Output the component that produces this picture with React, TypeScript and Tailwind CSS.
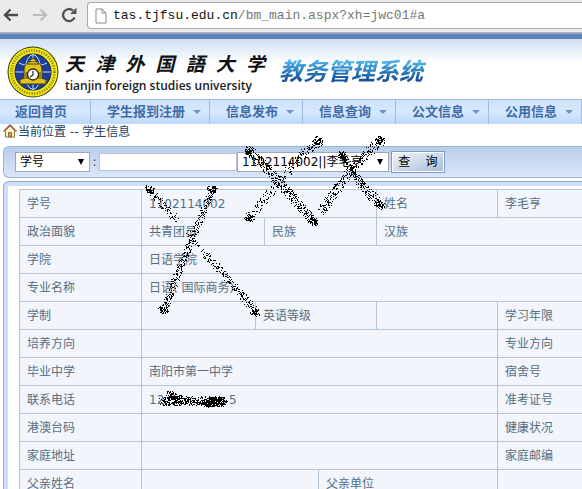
import React from "react";

type Point = [number, number];
type Cell = { text?: string; span?: number; head?: boolean };

const navItems = [
  { label: "学生报到注册" },
  { label: "信息发布" },
  { label: "信息查询" },
  { label: "公文信息" },
  { label: "公用信息" },
];

const rows: Cell[][] = [
  [{ text: "学号", head: true }, { text: "1102114002", span: 4 }, { text: "姓名", head: true }, { text: "李毛亨" }],
  [{ text: "政治面貌", head: true }, { text: "共青团员", span: 2 }, { text: "民族", span: 2, head: true }, { text: "汉族", span: 2 }],
  [{ text: "学院", head: true }, { text: "日语学院", span: 6 }],
  [{ text: "专业名称", head: true }, { text: "日语( 国际商务)", span: 6 }],
  [{ text: "学制", head: true }, {}, { text: "英语等级", span: 3, head: true }, {}, { text: "学习年限", head: true }],
  [{ text: "培养方向", head: true }, { span: 5 }, { text: "专业方向", head: true }],
  [{ text: "毕业中学", head: true }, { text: "南阳市第一中学", span: 5 }, { text: "宿舍号", head: true }],
  [{ text: "联系电话", head: true }, { text: "12                 5", span: 5 }, { text: "准考证号", head: true }],
  [{ text: "港澳台码", head: true }, { span: 5 }, { text: "健康状况", head: true }],
  [{ text: "家庭地址", head: true }, { span: 5 }, { text: "家庭邮编", head: true }],
  [{ text: "父亲姓名", head: true }, { span: 3 }, { text: "父亲单位", span: 2, head: true }, {}],
];

function random(seed: number) {
  let s = seed;
  return () => {
    s = (s * 1664525 + 1013904223) % 4294967296;
    return s / 4294967296;
  };
}

// Speckled brush: one-pixel grains scattered round a line, in loose clumps.
function spray(from: Point, to: Point, radius: number, density: number, seed: number) {
  const next = random(seed);
  const length = Math.hypot(to[0] - from[0], to[1] - from[1]);
  let d = "";
  const grain = (cx: number, cy: number, r: number) => {
    const a = next() * Math.PI * 2;
    const q = Math.sqrt(next()) * r;
    const x = Math.round(cx + Math.cos(a) * q);
    const y = Math.round(cy + Math.sin(a) * q);
    d += `M${x} ${y}h1v1h-1z`;
  };
  const clumps = Math.ceil((length * density) / 7);
  for (let i = 0; i < clumps; i++) {
    const t = (i + next()) / clumps;
    for (let k = 0; k < 7; k++) {
      grain(from[0] + (to[0] - from[0]) * t, from[1] + (to[1] - from[1]) * t, radius);
    }
  }
  return d;
}

// The heavy blot where the brush was first set down.
const blot = (x: number, y: number, seed: number) => spray([x - 2, y - 1], [x + 2, y + 1], 4, 12, seed);

const strokes = [
  spray([249, 150], [271, 173], 5, 3.4, 3),
  spray([271, 173], [313, 221], 5, 3.8, 7),
  spray([318, 141], [300, 156], 5, 2.6, 11),
  spray([300, 156], [249, 217], 5, 1.8, 13),
  spray([342, 154], [356, 178], 4, 3.2, 17),
  spray([356, 178], [380, 205], 5, 3.6, 19),
  spray([380, 140], [351, 169], 5, 2.6, 23),
  spray([351, 169], [321, 211], 5, 3.4, 29),
  spray([149, 189], [175, 217], 4, 2, 31),
  spray([175, 217], [203, 251], 3, 0.5, 33),
  spray([203, 251], [240, 293], 4, 2.2, 37),
  spray([240, 293], [256, 312], 4, 3.2, 41),
  spray([212, 189], [192, 237], 4, 2.4, 43),
  spray([192, 237], [163, 310], 4, 3, 47),
  blot(249, 151, 71),
  blot(313, 221, 72),
  blot(318, 141, 73),
  blot(249, 217, 74),
  blot(342, 155, 75),
  blot(379, 204, 76),
  blot(380, 140, 77),
  blot(149, 189, 78),
  blot(255, 312, 79),
  blot(212, 189, 80),
  blot(163, 309, 81),
  spray([162, 401], [222, 401], 5, 7, 53),
  spray([168, 394], [180, 398], 4, 9, 59),
  spray([208, 402], [223, 401], 5, 16, 61),
].join("");

function Emblem() {
  return (
    <svg className="h-13 w-13 shrink-0" viewBox="0 0 52 52" role="img" aria-label="天津外国语大学校徽">
      <circle cx="26" cy="26" r="25.5" fill="#39400d" />
      <circle cx="26" cy="26" r="24.5" fill="#f4e613" />
      <circle cx="26" cy="26" r="21.5" fill="none" stroke="#857d10" strokeWidth="2.6" strokeDasharray="1.1 1.5" />
      <circle cx="26" cy="26" r="18" fill="#1c3f9a" stroke="#10225c" />
      <g fill="none" stroke="#cbdcf5" strokeWidth="1">
        <ellipse cx="26" cy="26" rx="8" ry="17.5" />
        <path d="M26 8.500v35M8.500 26h35M12 17c8 4 20 4 28 0M12 35c8-4 20-4 28 0" />
      </g>
      <path d="M13 38v-4l4-2v-8c0-6 5-9 9-9s9 3 9 9v8l4 2v4z" fill="#e0c41c" stroke="#433b09" />
      <path d="M17 26h4v7h-4zM31 26h4v7h-4z" fill="#9c8312" />
      <path d="M20 18h12M22 15l4-3 4 3" stroke="#4b410a" fill="#e0c41c" />
      <circle cx="26" cy="28.500" r="5.500" fill="#fff" stroke="#2c2707" strokeWidth="1.300" />
      <path d="M26 25v4l-3 2" fill="none" stroke="#222" strokeWidth="1.200" />
    </svg>
  );
}

function HomeIcon() {
  return (
    <svg className="h-3.5 w-3.5 shrink-0" viewBox="0 0 14 14" aria-hidden="true">
      <path d="M2.500 6.500v6.500h9V6.500L7 2z" fill="#fdf3c4" stroke="#8a7a4c" />
      <path d="M.5 7.500L7 1l6.500 6.500" fill="none" stroke="#a0584a" strokeWidth="1.400" />
      <path d="M5.500 13V8.500h3V13z" fill="#d9a04e" stroke="#8b6a3b" />
    </svg>
  );
}

function Toolbar() {
  return (
    <div className="flex h-[33px] items-start border-b border-[#b5b5b5] bg-[#ebebeb]">
      <div className="flex h-[30px] w-[87px] shrink-0 items-center gap-[13px] pl-[3px]">
        <button type="button" aria-label="后退">
          <svg className="h-4 w-4" viewBox="0 0 16 16" fill="none" stroke="#4c4c4c" strokeWidth="2.400">
            <path d="M15 8H2M7.500 2.500L2 8l5.500 5.500" />
          </svg>
        </button>
        <button type="button" aria-label="前进">
          <svg className="h-4 w-4" viewBox="0 0 16 16" fill="none" stroke="#bcbcbc" strokeWidth="2.200">
            <path d="M1 8h13M8.500 2.500L14 8l-5.500 5.500" />
          </svg>
        </button>
        <button type="button" aria-label="重新加载">
          <svg className="h-4 w-4" viewBox="0 0 16 16">
            <path d="M13.500 10.500A6 6 0 1 1 12 3.600" fill="none" stroke="#555" strokeWidth="2.400" />
            <path d="M15.500 .5v6.500H9z" fill="#555" />
          </svg>
        </button>
      </div>
      <div className="mt-[2px] flex h-[27px] min-w-0 flex-1 items-center rounded-l-sm border border-r-0 border-[#a9a9a9] bg-white pl-[7px]">
        <svg className="h-4 w-3 shrink-0" viewBox="0 0 12 16" fill="#fff" stroke="#8a8a8a">
          <path d="M1 1h6l4 4v10H1zM7 1v4h4" />
        </svg>
        <div
          role="textbox"
          aria-label="地址栏"
          tabIndex={0}
          className="ml-[6px] whitespace-nowrap font-['Liberation_Mono',monospace] text-[13px] leading-5 text-[#777]"
        >
          <span className="text-[#111]">tas.tjfsu.edu.cn</span>/bm_main.aspx?xh=jwc01#a
        </div>
      </div>
    </div>
  );
}

function Banner() {
  return (
    <header className="flex h-[60px] items-start bg-linear-to-b from-[#d0e0f5] to-white to-40% pl-[7px] pt-[7px]">
      <Emblem />
      <div className="ml-[6px] w-[200px] shrink-0 pt-1">
        <div className="flex justify-between text-[19px] font-bold leading-7 text-[#111] italic">
          {Array.from("天津外国語大学").map((c) => (
            <span key={c}>{c}</span>
          ))}
        </div>
        <div className="whitespace-nowrap font-['Open_Sans',sans-serif] text-[12px] font-semibold leading-4 text-[#222]">
          tianjin foreign studies university
        </div>
      </div>
      <h1 className="ml-[14px] whitespace-nowrap bg-linear-to-b from-[#4db6ec] from-35% to-[#17549c] to-80% bg-clip-text pr-1 pt-[10px] text-2xl font-bold leading-8 text-transparent italic">
        教务管理系统
      </h1>
    </header>
  );
}

function Nav() {
  return (
    <nav className="flex h-[25px] overflow-hidden border-t border-[#9dbbdb] bg-linear-to-b from-[#cfe2fb] via-[#d6e8fe] to-[#bcd9fb] text-[13px] font-bold leading-6 text-[#3e6ca8]">
      <a href="#home" className="w-[91px] shrink-0 border-r border-[#9fbde0] pl-[15px]">
        返回首页
      </a>
      {navItems.map((item) => (
        <a
          key={item.label}
          href="#menu"
          className="flex shrink-0 items-center whitespace-nowrap border-r border-[#9fbde0] pl-4 pr-2"
        >
          {item.label}
          <svg className="ml-2 h-1 w-2" viewBox="0 0 8 4" fill="#6f93c0">
            <path d="M0 0h8L4 4z" />
          </svg>
        </a>
      ))}
    </nav>
  );
}

function Picker({ label, className, options }: { label: string; className: string; options: string[] }) {
  return (
    <div className={`relative shrink-0 ${className}`}>
      <select
        aria-label={label}
        className="block h-5 w-full appearance-none border border-[#9fa9b5] bg-white pl-1 text-xs text-black outline-none"
      >
        {options.map((o) => (
          <option key={o}>{o}</option>
        ))}
      </select>
      <svg className="pointer-events-none absolute right-[6px] top-[7px] h-1.5 w-1.5" viewBox="0 0 6 6">
        <path d="M0 0h6L3 6z" />
      </svg>
    </div>
  );
}

function SearchBar() {
  return (
    <form
      onSubmit={(e) => e.preventDefault()}
      className="ml-[3px] flex h-[32px] items-center rounded-l-md border border-r-0 border-[#9db6d2] bg-linear-to-b from-[#b9cdea] to-[#dbe6f9] pl-[11px] text-xs"
    >
      <Picker label="查询条件" className="w-[75px]" options={["学号"]} />
      <span className="w-[9px] shrink-0 text-center text-[#345]">:</span>
      <input
        aria-label="关键字"
        className="h-[18px] w-[138px] shrink-0 border border-[#b8c6d8] bg-white px-1 outline-none"
      />
      <Picker label="学生" className="w-[152px]" options={["1102114002||李毛亨"]} />
      <button
        type="submit"
        className="ml-[2px] h-[22px] w-[54px] shrink-0 whitespace-pre border border-[#7e9dc0] bg-linear-to-br from-[#f2f6fc] to-[#a9bcd8] text-black shadow-[inset_0_0_0_1px_#fff]"
      >
        {"查    询"}
      </button>
    </form>
  );
}

function StudentTable() {
  return (
    <table className="w-full table-fixed border-collapse bg-[#f2f6fc] text-left text-xs text-[#566d80]">
      <colgroup>
        <col className="w-[122px]" />
        <col className="w-[114px]" />
        <col className="w-[9px]" />
        <col className="w-[54px]" />
        <col className="w-[58px]" />
        <col className="w-[121px]" />
        <col />
      </colgroup>
      <tbody>
        {rows.map((row, r) => (
          <tr key={r} className="h-7">
            {row.map((cell, c) => {
              const Tag = cell.head ? "th" : "td";
              return (
                <Tag
                  key={c}
                  colSpan={cell.span}
                  className="whitespace-pre border border-[#b5c5d8] py-0 pl-[7px] font-normal last:border-r-0"
                >
                  {cell.text}
                </Tag>
              );
            })}
          </tr>
        ))}
      </tbody>
    </table>
  );
}

export default function App() {
  return (
    <div className="relative h-screen overflow-hidden bg-white font-['DejaVu_Sans','Noto_Sans_CJK_SC',sans-serif]">
      <Toolbar />
      <div className="h-[6px] border-t border-[#8aa5c8] bg-[#5e86ba]" />
      <Banner />
      <Nav />
      <div className="flex h-[22px] items-start gap-px pl-[3px] text-xs leading-4 text-[#1f4068]">
        <HomeIcon />
        <span className="whitespace-nowrap">当前位置 -- 学生信息</span>
      </div>
      <SearchBar />
      <main className="ml-[3px] mt-[3px] rounded-tl-md border-l border-t border-[#8fb0cc] bg-[#cfdef6] pl-1 pt-1">
        <div className="bg-white pl-[11px] pt-[3px]">
          <StudentTable />
        </div>
      </main>
      <svg
        className="pointer-events-none absolute left-0 top-0 h-[489px] w-[582px]"
        viewBox="0 0 582 489"
        shapeRendering="crispEdges"
        aria-hidden="true"
      >
        <path d={strokes} />
      </svg>
    </div>
  );
}
